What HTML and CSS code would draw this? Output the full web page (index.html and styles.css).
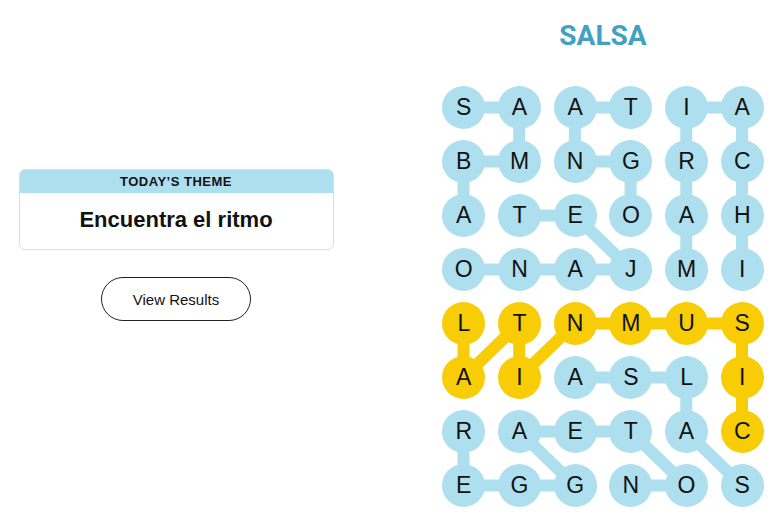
FILE: index.html
```html
<!DOCTYPE html>
<html lang="es">
<head>
<meta charset="utf-8">
<title>Strands</title>
<link rel="stylesheet" href="styles.css">
</head>
<body>
<main class="page">
  <section class="left">
    <div class="theme-card">
      <div class="theme-label">TODAY’S THEME</div>
      <div class="theme-title">Encuentra el ritmo</div>
    </div>
    <button class="results-btn" type="button">View Results</button>
  </section>
  <section class="right">
    <h1 class="word-title">SALSA</h1>
    <div class="board">
      <svg class="links" viewBox="0 0 321.5 421" width="321.5" height="421" aria-hidden="true">
        <g stroke="#aedfee" stroke-width="12" fill="none">
          <polyline points="21.5,21.5 77.2,21.5 77.2,75.5 21.5,75.5 21.5,129.5"/>
          <polyline points="188.6,21.5 132.9,21.5 132.9,75.5 188.6,75.5 188.6,129.5"/>
          <polyline points="244.3,183.5 244.3,21.5 300,21.5 300,183.5"/>
          <polyline points="77.2,129.5 132.9,129.5 188.6,183.5 21.5,183.5"/>
          <polyline points="132.9,291.5 244.3,291.5 244.3,345.5 300,399.5"/>
          <polyline points="21.5,345.5 21.5,399.5 132.9,399.5 77.2,345.5 188.6,345.5 244.3,399.5 188.6,399.5"/>
        </g>
        <g stroke="#f8cd05" stroke-width="12" fill="none">
          <polyline points="21.5,237.5 21.5,291.5 77.2,237.5 77.2,291.5 132.9,237.5 300,237.5 300,345.5"/>
        </g>
      </svg>
      <div class="cell">S</div><div class="cell">A</div><div class="cell">A</div><div class="cell">T</div><div class="cell">I</div><div class="cell">A</div>
      <div class="cell">B</div><div class="cell">M</div><div class="cell">N</div><div class="cell">G</div><div class="cell">R</div><div class="cell">C</div>
      <div class="cell">A</div><div class="cell">T</div><div class="cell">E</div><div class="cell">O</div><div class="cell">A</div><div class="cell">H</div>
      <div class="cell">O</div><div class="cell">N</div><div class="cell">A</div><div class="cell">J</div><div class="cell">M</div><div class="cell">I</div>
      <div class="cell gold">L</div><div class="cell gold">T</div><div class="cell gold">N</div><div class="cell gold">M</div><div class="cell gold">U</div><div class="cell gold">S</div>
      <div class="cell gold">A</div><div class="cell gold">I</div><div class="cell">A</div><div class="cell">S</div><div class="cell">L</div><div class="cell gold">I</div>
      <div class="cell">R</div><div class="cell">A</div><div class="cell">E</div><div class="cell">T</div><div class="cell">A</div><div class="cell gold">C</div>
      <div class="cell">E</div><div class="cell">G</div><div class="cell">G</div><div class="cell">N</div><div class="cell">O</div><div class="cell">S</div>
    </div>
  </section>
</main>
</body>
</html>
```

FILE: styles.css
```css
* {
  box-sizing: border-box;
}

html, body {
  margin: 0;
  padding: 0;
  background: #ffffff;
}

body {
  font-family: "Liberation Sans", Arial, sans-serif;
  color: #121212;
}

.page {
  display: flex;
  width: 778px;
  height: 528px;
  gap: 76px;
}

.left {
  width: 352px;
  flex: none;
  display: flex;
  flex-direction: column;
  align-items: center;
  padding-top: 169px;
}

.theme-card {
  width: 315px;
  border: 1px solid #dcdcdc;
  border-radius: 6px;
  overflow: hidden;
  display: flex;
  flex-direction: column;
}

.theme-label {
  height: 23px;
  background: #aedfee;
  font-weight: 700;
  font-size: 13px;
  letter-spacing: 0.5px;
  line-height: 23px;
  text-align: center;
  color: #121212;
}

.theme-title {
  height: 56px;
  line-height: 54px;
  font-weight: 700;
  font-size: 22px;
  text-align: center;
  color: #121212;
}

.results-btn {
  margin-top: 27px;
  width: 150px;
  height: 44px;
  border: 1px solid #222222;
  border-radius: 22px;
  background: #ffffff;
  font-family: "Liberation Sans", Arial, sans-serif;
  font-size: 15px;
  color: #121212;
  padding: 0;
}

.right {
  flex: 1;
  display: flex;
  flex-direction: column;
  align-items: center;
  padding-top: 20px;
}

.word-title {
  margin: 0;
  font-family: Roboto, "Liberation Sans", sans-serif;
  font-weight: 700;
  font-size: 28px;
  line-height: 32px;
  color: #42a0c2;
}

.board {
  position: relative;
  margin-top: 33.5px;
  display: grid;
  grid-template-columns: repeat(6, 43px);
  grid-auto-rows: 43px;
  column-gap: 12.7px;
  row-gap: 11px;
}

.links {
  position: absolute;
  left: 0;
  top: 0;
  z-index: 0;
}

.cell {
  position: relative;
  z-index: 1;
  width: 43px;
  height: 43px;
  border-radius: 50%;
  background: #aedfee;
  display: flex;
  align-items: center;
  justify-content: center;
  font-size: 23px;
  line-height: 1;
  color: #121212;
}

.cell.gold {
  background: #f8cd05;
}
```
